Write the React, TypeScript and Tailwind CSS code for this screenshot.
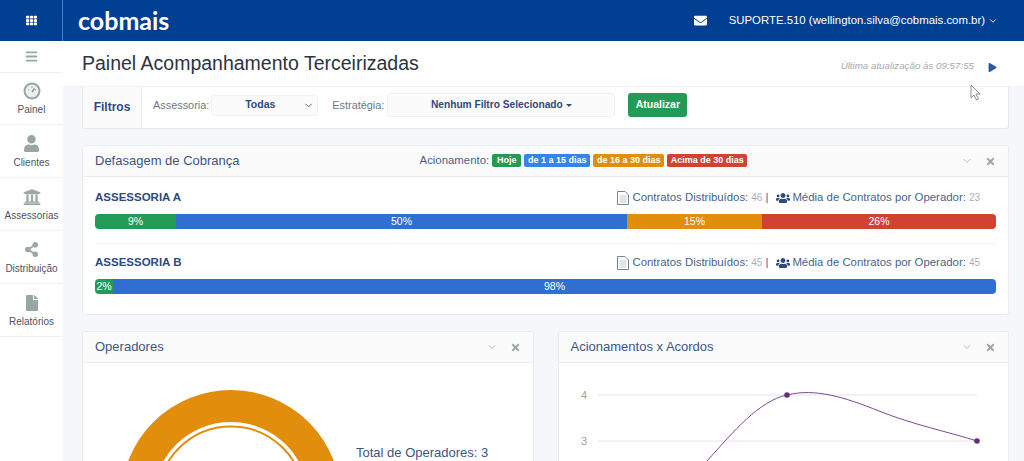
import { ChevronDown } from 'lucide-react';
import {
  FaBars,
  FaEnvelope,
  FaFile,
  FaPlay,
  FaShareAlt,
  FaTh,
  FaTimes,
  FaUniversity,
  FaUser,
  FaUsers,
} from 'react-icons/fa';
import type { ReactNode } from 'react';

const GaugeIcon = () => (
  <svg width="18" height="18" viewBox="0 0 18 18">
    <circle cx="9" cy="9" r="7.5" fill="#eef0f0" stroke="#9aa5a5" strokeWidth="2" />
    <path d="M5 7.5 6 8M9 4.5V6M13 7.5 12 8" stroke="#9aa5a5" strokeWidth="1.2" />
    <path d="M9 10 11.5 6.5" stroke="#8a9595" strokeWidth="1.4" />
  </svg>
);

const DocIcon = () => (
  <svg width="12" height="14" viewBox="0 0 12 14" className="mr-[3px]">
    <path d="M.5.5H8L11.5 4V13.5H.5Z" fill="#fff" stroke="#77839a" />
    <path d="M2.5 5H9.5M2.5 7H9.5M2.5 9H9.5M2.5 11H9.5" stroke="#c4c9d2" strokeWidth="1" />
  </svg>
);

const sideItems = [
  { label: 'Painel', icon: <GaugeIcon />, height: 'h-[52px]' },
  { label: 'Clientes', icon: <FaUser size={17} />, height: 'h-[53px]' },
  { label: 'Assessorias', icon: <FaUniversity size={18} />, height: 'h-[53px]' },
  { label: 'Distribuição', icon: <FaShareAlt size={15} />, height: 'h-[53px]' },
  { label: 'Relatórios', icon: <FaFile size={16} />, height: 'h-[53px]' },
];

const Sidebar = () => (
  <aside className="w-[63px] shrink-0 bg-white">
    <div className="flex h-[32px] items-center justify-center border-b border-[#f0f0f0] text-[#9aa5a5]">
      <FaBars size={13} />
    </div>
    {sideItems.map((item) => (
      <div
        key={item.label}
        className={`${item.height} flex flex-col items-center justify-center gap-[5px] border-b border-[#f0f0f0] text-[#9aa5a5]`}
      >
        <span className="flex h-[18px] items-center">{item.icon}</span>
        <span className="text-[10px] leading-none text-[#4d5560]">{item.label}</span>
      </div>
    ))}
  </aside>
);

const CardHeader = ({ title, children }: { title: string; children?: ReactNode }) => (
  <div className="flex h-[31px] items-center border-b border-[#e8ebef] bg-[#fbfbfc] px-[12px]">
    <span className="text-[13px] text-[#3d5585]">{title}</span>
    <div className="flex flex-1 items-center">{children}</div>
    <ChevronDown size={12} className="mr-[12px] text-[#b3bac0]" />
    <FaTimes size={11} className="text-[#9aa5a5]" />
  </div>
);

const Badge = ({ color, children }: { color: string; children: string }) => (
  <span className={`${color} rounded-[2px] text-center text-[9px] leading-[13px] font-bold text-white`}>
    {children}
  </span>
);

const Segment = ({ width, color, label }: { width: string; color: string; label: string }) => (
  <div className={`${width} ${color} flex items-center justify-center text-[10.5px] text-white`}>{label}</div>
);

const AgencyRow = ({
  name,
  contracts,
  average,
  children,
}: {
  name: string;
  contracts: number;
  average: number;
  children: ReactNode;
}) => (
  <div>
    <div className="flex h-[20px] items-center">
      <span className="text-[11.5px] font-bold text-[#2f4a7c]">{name}</span>
      <div className="ml-auto flex items-center pr-[16px] text-[11.4px] text-[#4a5f8a]">
        <DocIcon />
        <span>Contratos Distribuídos:</span>
        <span className="ml-[3px] text-[10px] text-[#aab0b5]">{contracts}</span>
        <span className="ml-[3px]">|</span>
        <FaUsers size={14} className="mr-[2px] ml-[8px] text-[#2f4a7c]" />
        <span>Média de Contratos por Operador:</span>
        <span className="ml-[3px] text-[10px] text-[#aab0b5]">{average}</span>
      </div>
    </div>
    <div className="mt-[6px] flex h-[15px] overflow-hidden rounded-[4px]">{children}</div>
  </div>
);

const DonutCard = () => (
  <div className="flex-1 overflow-hidden rounded-t-[3px] border border-[#e8ebef] bg-white">
    <CardHeader title="Operadores" />
    <div className="flex pt-[27px] pl-[38px]">
      <svg width="220" height="220" viewBox="0 0 220 220" className="shrink-0">
        <circle cx="110" cy="110" r="94" fill="none" stroke="#e08e0b" strokeWidth="32" />
        <circle cx="110" cy="110" r="73.5" fill="none" stroke="#e08e0b" strokeWidth="2" />
      </svg>
      <span className="mt-[53px] ml-[15px] text-[13px] whitespace-nowrap text-[#3d5585]">Total de Operadores: 3</span>
    </div>
  </div>
);

const ChartCard = () => (
  <div className="flex-1 overflow-hidden rounded-t-[3px] border border-[#e8ebef] bg-white">
    <CardHeader title="Acionamentos x Acordos" />
    <svg width="449" height="100" viewBox="0 0 449 100" className="block">
      <path d="M39 32H418M39 78H418" stroke="#e4e4e8" strokeWidth="1" />
      <text x="25" y="36" textAnchor="middle" fontSize="11" fill="#a0a0a0">4</text>
      <text x="25" y="82" textAnchor="middle" fontSize="11" fill="#a0a0a0">3</text>
      <path
        d="M148 98C175 68 200 38 228 32C256 25 285 34 320 48C355 62 390 69 418 78"
        fill="none"
        stroke="#7b4b8e"
        strokeWidth="1"
      />
      <circle cx="228" cy="32" r="2.8" fill="#6b2c80" />
      <circle cx="418" cy="78" r="2.8" fill="#6b2c80" />
    </svg>
  </div>
);

export default function App() {
  return (
    <div className="relative h-[461px] w-[1024px] overflow-hidden bg-[#f5f7fa] font-['Liberation_Sans',Arial,sans-serif]">
      <header className="flex h-[41px] bg-[#003f92] text-white">
        <div className="flex w-[63px] items-center justify-center border-r border-[#4f7fc0]">
          <FaTh size={11} />
        </div>
        <span className="ml-[15px] font-['Lato',sans-serif] text-[25px] leading-[41px] font-bold">cobmais</span>
        <div className="ml-auto flex items-center pr-[26px] text-[11.4px]">
          <FaEnvelope size={13} className="mr-[22px]" />
          <span>SUPORTE.510 (wellington.silva@cobmais.com.br)</span>
          <ChevronDown size={10} className="ml-[3px]" />
        </div>
      </header>
      <div className="flex">
        <Sidebar />
        <main className="min-w-0 flex-1">
          <div className="flex h-[46px] items-center border-b border-[#f0f1f3] bg-white pr-[27px] pl-[19px]">
            <h1 className="text-[19.5px] text-[#2b3442]">Painel Acompanhamento Terceirizadas</h1>
            <span className="mt-[6px] ml-auto text-[9.75px] text-[#a5a9ad] italic">Última atualização às 09:57:55</span>
            <FaPlay size={9} className="mt-[7px] ml-[14px] text-[#2c5aa0]" />
          </div>
          <div className="flex flex-col gap-[16px] pr-[15px] pl-[19px]">
            <section className="flex h-[42px] overflow-hidden rounded-b-[3px] border border-t-0 border-[#e3e6ea] bg-white">
              <div className="flex w-[59px] items-center justify-center border-r border-[#eef0f2] bg-[#fbfbfc] pb-[2px] text-[12px] font-bold text-[#2f4a7c]">
                Filtros
              </div>
              <div className="flex items-center pb-[5px] pl-[11px] text-[10.9px] text-[#6b7785]">
                <span>Assessoria:</span>
                <div className="ml-[2px] flex h-[21px] w-[107px] items-center rounded-[3px] border border-[#f0f1f3] bg-[#fbfbfc] pr-[3px]">
                  <span className="flex-1 pl-[5px] text-center text-[10.5px] font-bold text-[#2f4a7c]">Todas</span>
                  <ChevronDown size={11} className="text-[#44566f]" />
                </div>
                <span className="ml-[14px]">Estratégia:</span>
                <div className="ml-[3px] flex h-[24px] w-[228px] items-center justify-center rounded-[3px] border border-[#f0f1f3] bg-[#fbfbfc] text-[10.2px] font-bold text-[#2f4a7c]">
                  Nenhum Filtro Selecionado
                  <span className="ml-[3px] h-0 w-0 border-x-[3px] border-t-[3px] border-x-transparent border-t-[#2f4a7c]" />
                </div>
                <button className="ml-[13px] h-[24px] w-[59px] rounded-[3px] bg-[#239b56] text-[10.5px] font-bold text-white">
                  Atualizar
                </button>
              </div>
            </section>

            <section className="h-[170px] overflow-hidden rounded-[3px] border border-[#e8ebef] bg-white">
              <CardHeader title="Defasagem de Cobrança">
                <div className="ml-[180px] flex items-center gap-[3px]">
                  <span className="text-[11.4px] text-[#4a5f8a]">Acionamento:</span>
                  <div className="grid grid-cols-[29px_66px_71px_80px] gap-[3px]">
                    <Badge color="bg-[#239b56]">Hoje</Badge>
                    <Badge color="bg-[#3583f0]">de 1 a 15 dias</Badge>
                    <Badge color="bg-[#e08e0b]">de 16 a 30 dias</Badge>
                    <Badge color="bg-[#d14233]">Acima de 30 dias</Badge>
                  </div>
                </div>
              </CardHeader>
              <div className="px-[12px] pt-[11px]">
                <AgencyRow name="ASSESSORIA A" contracts={46} average={23}>
                  <Segment width="w-[81px]" color="bg-[#239b56]" label="9%" />
                  <Segment width="w-[451px]" color="bg-[#2f6fd3]" label="50%" />
                  <Segment width="w-[135px]" color="bg-[#e08e0b]" label="15%" />
                  <Segment width="flex-1" color="bg-[#d14233]" label="26%" />
                </AgencyRow>
                <div className="mt-[14px] mb-[9px] border-t border-[#f3f4f6]" />
                <AgencyRow name="ASSESSORIA B" contracts={45} average={45}>
                  <Segment width="w-[18px]" color="bg-[#239b56]" label="2%" />
                  <Segment width="flex-1" color="bg-[#2f6fd3]" label="98%" />
                </AgencyRow>
              </div>
            </section>

            <div className="flex gap-[24px]">
              <DonutCard />
              <ChartCard />
            </div>
          </div>
        </main>
      </div>
      <svg width="12" height="17" viewBox="0 0 12 17" className="absolute top-[84px] left-[970px]">
        <path d="M1 1V14L4 11L6.5 16L8.5 15L6 10H10Z" fill="#fff" stroke="#8a8a8a" strokeWidth="1" />
      </svg>
    </div>
  );
}
